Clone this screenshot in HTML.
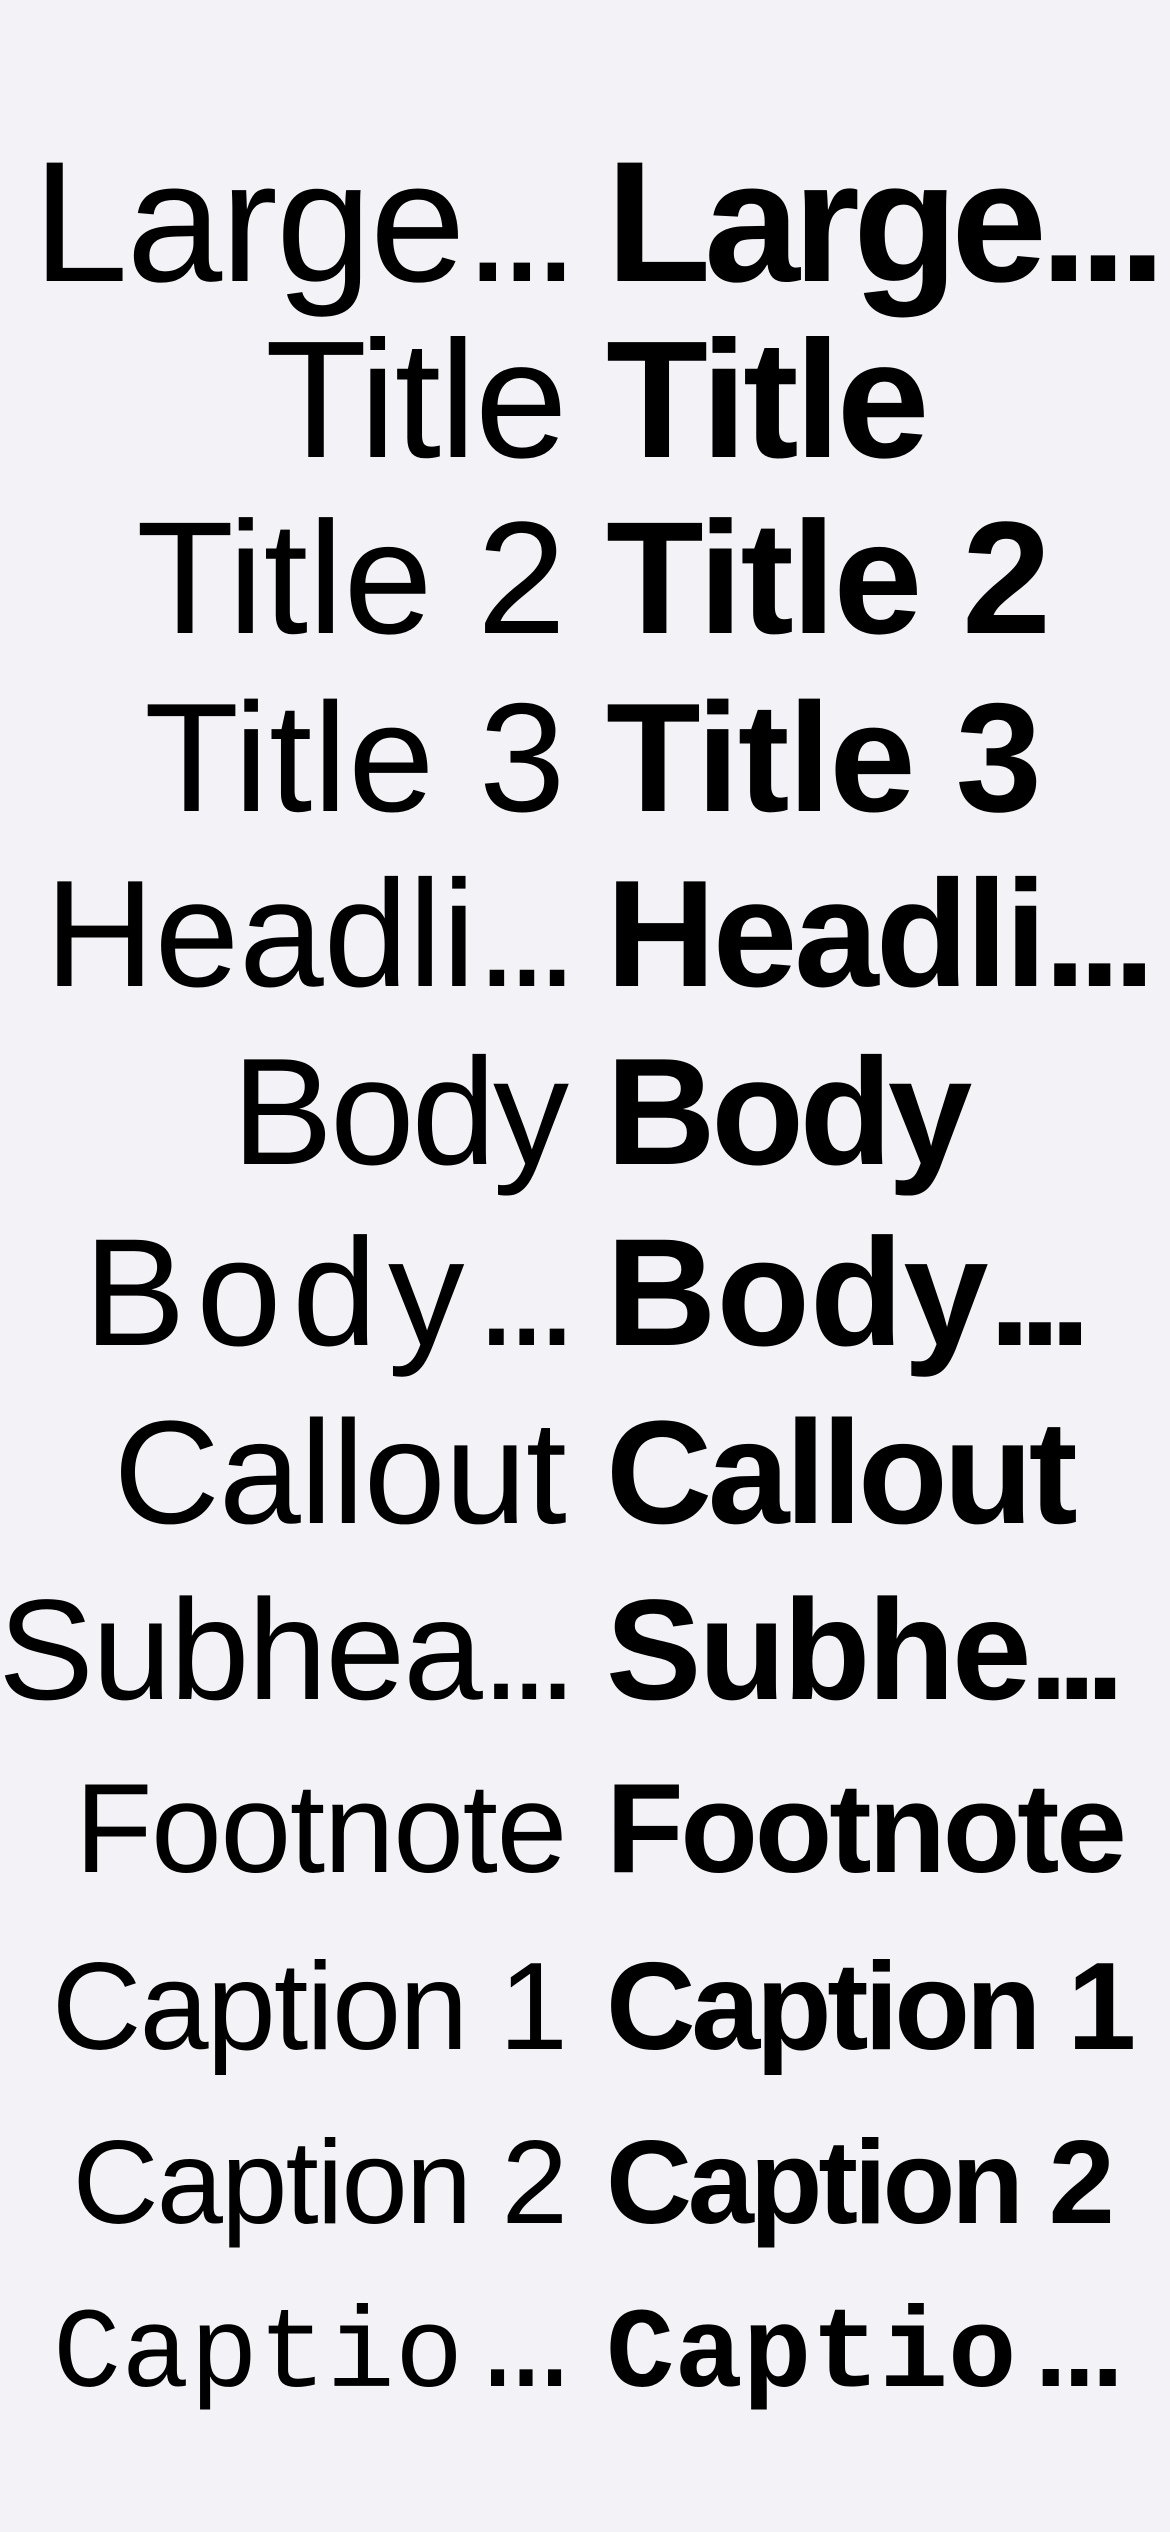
<!DOCTYPE html>
<html><head><meta charset="utf-8"><style>
html,body{margin:0;padding:0}
body{width:1170px;height:2532px;background:#f2f2f7;position:relative;overflow:hidden;font-family:"Liberation Sans",sans-serif;color:#000}
.r{position:absolute;white-space:nowrap;line-height:1em}
.l{right:604px;text-align:right;font-weight:400}
.b{left:606px;font-weight:700}
.d{letter-spacing:-0.08em}
.d2{letter-spacing:-0.05em}
.m{font-family:"Liberation Mono",monospace}
.m .d{letter-spacing:-0.35em}
</style></head><body>
<div class="r l" style="font-size:172px;top:136px;letter-spacing:-0.01em">Large<span class="d">...</span></div>
<div class="r b" style="font-size:172px;top:136px;letter-spacing:-0.04em">Large<span class="d2">...</span></div>

<div class="r l" style="font-size:167px;top:317px;letter-spacing:-0.01em">Title</div>
<div class="r b" style="font-size:167px;top:317px;letter-spacing:-0.025em">Title</div>

<div class="r l" style="font-size:160px;top:498px;letter-spacing:0">Title 2</div>
<div class="r b" style="font-size:160px;top:498px;letter-spacing:-0.015em">Title 2</div>

<div class="r l" style="font-size:155px;top:680px;letter-spacing:0.005em">Title 3</div>
<div class="r b" style="font-size:155px;top:680px;letter-spacing:-0.01em">Title 3</div>

<div class="r l" style="font-size:152px;top:858px;letter-spacing:0">Headli<span class="d">...</span></div>
<div class="r b" style="font-size:152px;top:858px;letter-spacing:-0.02em">Headli<span class="d2">...</span></div>

<div class="r l" style="font-size:152px;top:1036px;letter-spacing:-0.02em">Body</div>
<div class="r b" style="font-size:152px;top:1036px;letter-spacing:-0.03em">Body</div>

<div class="r l" style="font-size:153px;top:1216px;letter-spacing:0.07em">Body<span class="d">...</span></div>
<div class="r b" style="font-size:153px;top:1216px;letter-spacing:0">Body<span class="d">...</span></div>

<div class="r l" style="font-size:147px;top:1400px;letter-spacing:-0.005em">Callout</div>
<div class="r b" style="font-size:147px;top:1400px;letter-spacing:-0.03em">Callout</div>

<div class="r l" style="font-size:143px;top:1579px;letter-spacing:-0.012em">Subhea<span class="d">...</span></div>
<div class="r b" style="font-size:143px;top:1579px;letter-spacing:-0.02em">Subhe<span class="d">...</span></div>

<div class="r l" style="font-size:127px;top:1765px;letter-spacing:-0.01em">Footnote</div>
<div class="r b" style="font-size:127px;top:1765px;letter-spacing:-0.025em">Footnote</div>

<div class="r l" style="font-size:124px;top:1945px;letter-spacing:-0.015em">Caption 1</div>
<div class="r b" style="font-size:124px;top:1945px;letter-spacing:-0.035em">Caption 1</div>

<div class="r l" style="font-size:119px;top:2123px;letter-spacing:-0.015em">Caption 2</div>
<div class="r b" style="font-size:119px;top:2123px;letter-spacing:-0.035em">Caption 2</div>

<div class="r l m" style="font-size:114px;top:2300px;letter-spacing:0">Captio<span class="d">..</span><span style="margin-right:-0.2em">.</span></div>
<div class="r b m" style="font-size:114px;top:2300px;letter-spacing:0">Captio<span class="d">..</span>.</div>
</body></html>
